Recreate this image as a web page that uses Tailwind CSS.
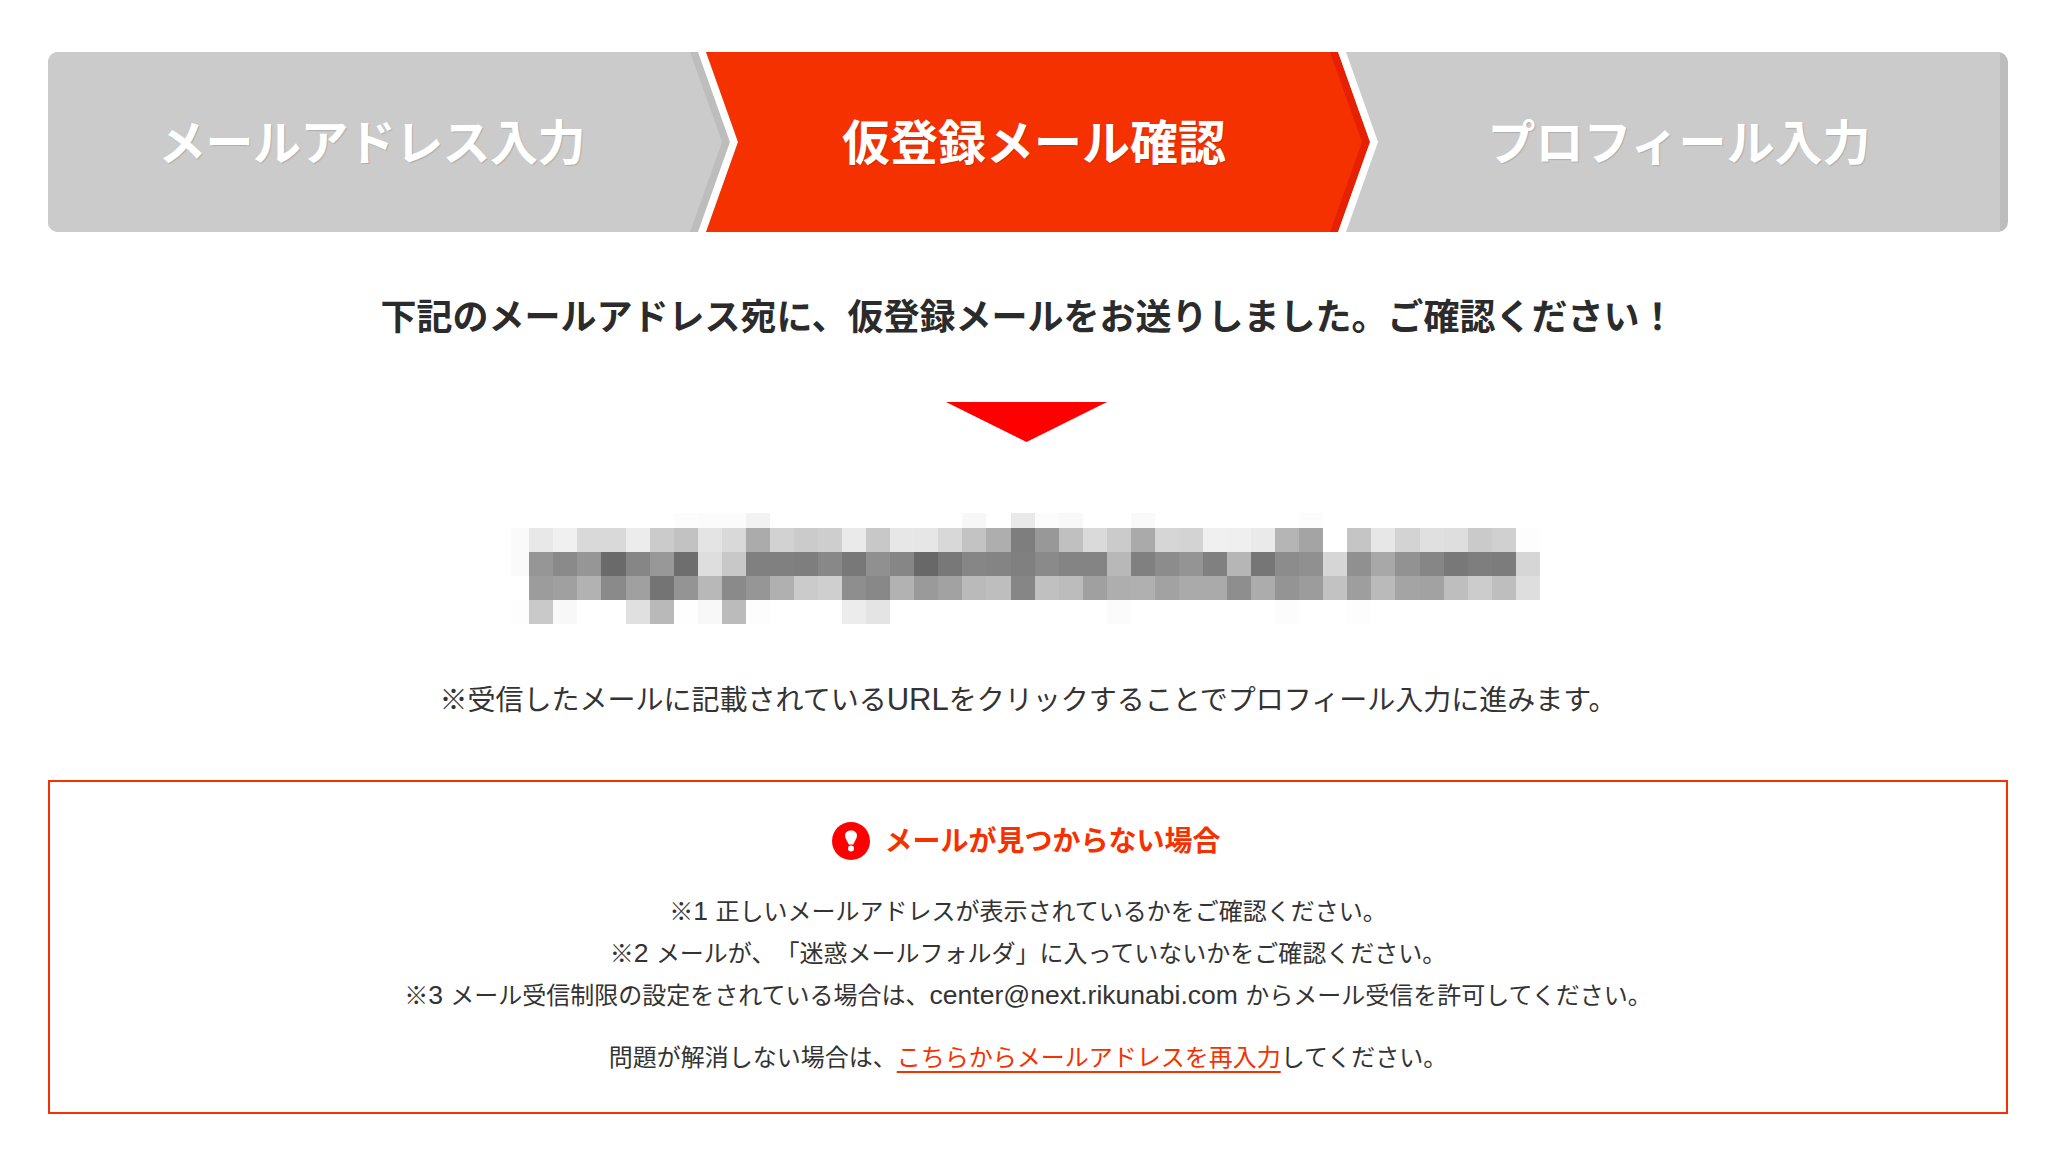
<!DOCTYPE html>
<html lang="ja">
<head>
<meta charset="utf-8">
<title>仮登録メール確認</title>
<script src="https://cdn.jsdelivr.net/npm/@tailwindcss/browser@4"></script>
</head>
<body class="bg-white font-['Liberation_Sans','Noto_Sans_CJK_JP',sans-serif] text-[#333333] [text-spacing-trim:space-all]">
<main class="ml-[48px] w-[1960px] pt-[52px] pb-[38px] flex flex-col items-center">

  <div class="relative w-full h-[180px] pb-[6px] flex items-center font-['Noto_Sans_CJK_JP',sans-serif] font-bold text-white text-[48px] leading-none [text-shadow:1px_1px_1px_rgba(0,0,0,0.15)]">
    <svg class="absolute inset-0" width="1960" height="180" viewBox="0 0 1960 180" aria-hidden="true">
      <rect x="0" y="0" width="1960" height="180" rx="10" fill="#bdbdbd"/>
      <path d="M10 0H1952V180H10A10 10 0 0 1 0 170V10A10 10 0 0 1 10 0Z" fill="#cbcbcb"/>
      <polygon points="642,0 650,0 682,90 650,180 642,180 674,90" fill="#bdbdbd"/>
      <polygon points="650,0 658,0 690,90 658,180 650,180 682,90" fill="#ffffff"/>
      <polygon points="658,0 1290,0 1322,90 1290,180 658,180 690,90" fill="#f53100"/>
      <polygon points="1282,0 1290,0 1322,90 1290,180 1282,180 1314,90" fill="#e62000"/>
      <polygon points="1290,0 1298,0 1330,90 1298,180 1290,180 1322,90" fill="#ffffff"/>
    </svg>
    <div class="relative w-[647px] text-center tracking-[-0.6px]">メールアドレス入力</div>
    <div class="relative w-[678px] text-center">仮登録メール確認</div>
    <div class="relative flex-1 pr-[23px] text-center">プロフィール入力</div>
  </div>

  <h1 class="mt-[56px] font-['Noto_Sans_CJK_JP',sans-serif] text-[36px] leading-[52px] font-bold text-[#2b2b2b]">下記のメールアドレス宛に、仮登録メールをお送りしました。ご確認ください！</h1>

  <svg class="mt-[62px] mr-[3px] block" width="161" height="40" viewBox="0 0 161 40" aria-hidden="true"><polygon points="0,0 161,0 80.5,40" fill="#ff0000"/></svg>

  <svg class="mt-[71px] block" width="1034" height="111" viewBox="0 0 1034 111" shape-rendering="crispEdges" role="img" aria-label="モザイク処理されたメールアドレス">
    <g transform="translate(18.3 0) scale(1.0025 1)">
      <rect x="-18" y="15" width="18" height="24" fill="#fafafa"/><rect x="-18" y="39" width="18" height="24" fill="#fafafa"/><rect x="-18" y="87" width="18" height="24" fill="#fdfdfd"/>
      <rect x="144" y="0" width="24" height="15" fill="#fcfcfc"/><rect x="168" y="0" width="24" height="15" fill="#fbfbfb"/><rect x="192" y="0" width="24" height="15" fill="#fbfbfb"/><rect x="216" y="0" width="24" height="15" fill="#f2f2f2"/>
      <rect x="432" y="0" width="24" height="15" fill="#f7f7f7"/><rect x="480" y="0" width="24" height="15" fill="#e9e9e9"/><rect x="504" y="0" width="24" height="15" fill="#fbfbfb"/><rect x="528" y="0" width="24" height="15" fill="#f8f8f8"/><rect x="600" y="0" width="24" height="15" fill="#f9f9f9"/><rect x="768" y="0" width="24" height="15" fill="#fcfcfc"/>

      <rect x="0" y="15" width="24" height="24" fill="#e8e8e8"/><rect x="24" y="15" width="24" height="24" fill="#f0f0f0"/><rect x="48" y="15" width="24" height="24" fill="#d9d9d9"/><rect x="72" y="15" width="24" height="24" fill="#d9d9d9"/><rect x="96" y="15" width="24" height="24" fill="#ececec"/><rect x="120" y="15" width="24" height="24" fill="#cbcbcb"/><rect x="144" y="15" width="24" height="24" fill="#c2c2c2"/><rect x="168" y="15" width="24" height="24" fill="#e4e4e4"/><rect x="192" y="15" width="24" height="24" fill="#d9d9d9"/><rect x="216" y="15" width="24" height="24" fill="#ababab"/><rect x="240" y="15" width="24" height="24" fill="#d2d2d2"/><rect x="264" y="15" width="24" height="24" fill="#cbcbcb"/><rect x="288" y="15" width="24" height="24" fill="#cecece"/><rect x="312" y="15" width="24" height="24" fill="#eaeaea"/><rect x="336" y="15" width="24" height="24" fill="#c8c8c8"/><rect x="360" y="15" width="24" height="24" fill="#e7e7e7"/><rect x="384" y="15" width="24" height="24" fill="#e6e6e6"/><rect x="408" y="15" width="24" height="24" fill="#d8d8d8"/><rect x="432" y="15" width="24" height="24" fill="#c3c3c3"/><rect x="456" y="15" width="24" height="24" fill="#aeaeae"/><rect x="480" y="15" width="24" height="24" fill="#7e7e7e"/><rect x="504" y="15" width="24" height="24" fill="#989898"/><rect x="528" y="15" width="24" height="24" fill="#c0c0c0"/><rect x="552" y="15" width="24" height="24" fill="#dadada"/><rect x="576" y="15" width="24" height="24" fill="#cbcbcb"/><rect x="600" y="15" width="24" height="24" fill="#aaaaaa"/><rect x="624" y="15" width="24" height="24" fill="#d6d6d6"/><rect x="648" y="15" width="24" height="24" fill="#d3d3d3"/><rect x="672" y="15" width="24" height="24" fill="#f0f0f0"/><rect x="696" y="15" width="24" height="24" fill="#efefef"/><rect x="720" y="15" width="24" height="24" fill="#eaeaea"/><rect x="744" y="15" width="24" height="24" fill="#b5b5b5"/><rect x="768" y="15" width="24" height="24" fill="#a4a4a4"/><rect x="816" y="15" width="24" height="24" fill="#c5c5c5"/><rect x="840" y="15" width="24" height="24" fill="#e7e7e7"/><rect x="864" y="15" width="24" height="24" fill="#d3d3d3"/><rect x="888" y="15" width="24" height="24" fill="#e0e0e0"/><rect x="912" y="15" width="24" height="24" fill="#dedede"/><rect x="936" y="15" width="24" height="24" fill="#cacaca"/><rect x="960" y="15" width="24" height="24" fill="#d0d0d0"/><rect x="984" y="15" width="24" height="24" fill="#fdfdfd"/>

      <rect x="0" y="39" width="24" height="24" fill="#969696"/><rect x="24" y="39" width="24" height="24" fill="#8a8a8a"/><rect x="48" y="39" width="24" height="24" fill="#969696"/><rect x="72" y="39" width="24" height="24" fill="#6a6a6a"/><rect x="96" y="39" width="24" height="24" fill="#868686"/><rect x="120" y="39" width="24" height="24" fill="#989898"/><rect x="144" y="39" width="24" height="24" fill="#6e6e6e"/><rect x="168" y="39" width="24" height="24" fill="#dedede"/><rect x="192" y="39" width="24" height="24" fill="#c8c8c8"/><rect x="216" y="39" width="24" height="24" fill="#808080"/><rect x="240" y="39" width="24" height="24" fill="#808080"/><rect x="264" y="39" width="24" height="24" fill="#7e7e7e"/><rect x="288" y="39" width="24" height="24" fill="#888888"/><rect x="312" y="39" width="24" height="24" fill="#787878"/><rect x="336" y="39" width="24" height="24" fill="#909090"/><rect x="360" y="39" width="24" height="24" fill="#868686"/><rect x="384" y="39" width="24" height="24" fill="#686868"/><rect x="408" y="39" width="24" height="24" fill="#787878"/><rect x="432" y="39" width="24" height="24" fill="#868686"/><rect x="456" y="39" width="24" height="24" fill="#848484"/><rect x="480" y="39" width="24" height="24" fill="#808080"/><rect x="504" y="39" width="24" height="24" fill="#8a8a8a"/><rect x="528" y="39" width="24" height="24" fill="#848484"/><rect x="552" y="39" width="24" height="24" fill="#848484"/><rect x="576" y="39" width="24" height="24" fill="#b8b8b8"/><rect x="600" y="39" width="24" height="24" fill="#808080"/><rect x="624" y="39" width="24" height="24" fill="#8c8c8c"/><rect x="648" y="39" width="24" height="24" fill="#949494"/><rect x="672" y="39" width="24" height="24" fill="#808080"/><rect x="696" y="39" width="24" height="24" fill="#b6b6b6"/><rect x="720" y="39" width="24" height="24" fill="#767676"/><rect x="744" y="39" width="24" height="24" fill="#8c8c8c"/><rect x="768" y="39" width="24" height="24" fill="#909090"/><rect x="792" y="39" width="24" height="24" fill="#d6d6d6"/><rect x="816" y="39" width="24" height="24" fill="#909090"/><rect x="840" y="39" width="24" height="24" fill="#a8a8a8"/><rect x="864" y="39" width="24" height="24" fill="#929292"/><rect x="888" y="39" width="24" height="24" fill="#868686"/><rect x="912" y="39" width="24" height="24" fill="#787878"/><rect x="936" y="39" width="24" height="24" fill="#7e7e7e"/><rect x="960" y="39" width="24" height="24" fill="#7c7c7c"/><rect x="984" y="39" width="24" height="24" fill="#d6d6d6"/>

      <rect x="0" y="63" width="24" height="24" fill="#9c9c9c"/><rect x="24" y="63" width="24" height="24" fill="#a0a0a0"/><rect x="48" y="63" width="24" height="24" fill="#b2b2b2"/><rect x="72" y="63" width="24" height="24" fill="#8a8a8a"/><rect x="96" y="63" width="24" height="24" fill="#a0a0a0"/><rect x="120" y="63" width="24" height="24" fill="#747474"/><rect x="144" y="63" width="24" height="24" fill="#949494"/><rect x="168" y="63" width="24" height="24" fill="#b8b8b8"/><rect x="192" y="63" width="24" height="24" fill="#8a8a8a"/><rect x="216" y="63" width="24" height="24" fill="#969696"/><rect x="240" y="63" width="24" height="24" fill="#b0b0b0"/><rect x="264" y="63" width="24" height="24" fill="#cbcbcb"/><rect x="288" y="63" width="24" height="24" fill="#cfcfcf"/><rect x="312" y="63" width="24" height="24" fill="#8e8e8e"/><rect x="336" y="63" width="24" height="24" fill="#888888"/><rect x="360" y="63" width="24" height="24" fill="#b2b2b2"/><rect x="384" y="63" width="24" height="24" fill="#9a9a9a"/><rect x="408" y="63" width="24" height="24" fill="#a2a2a2"/><rect x="432" y="63" width="24" height="24" fill="#bababa"/><rect x="456" y="63" width="24" height="24" fill="#bebebe"/><rect x="480" y="63" width="24" height="24" fill="#868686"/><rect x="504" y="63" width="24" height="24" fill="#c0c0c0"/><rect x="528" y="63" width="24" height="24" fill="#bcbcbc"/><rect x="552" y="63" width="24" height="24" fill="#a0a0a0"/><rect x="576" y="63" width="24" height="24" fill="#aeaeae"/><rect x="600" y="63" width="24" height="24" fill="#b0b0b0"/><rect x="624" y="63" width="24" height="24" fill="#a2a2a2"/><rect x="648" y="63" width="24" height="24" fill="#aaaaaa"/><rect x="672" y="63" width="24" height="24" fill="#aaaaaa"/><rect x="696" y="63" width="24" height="24" fill="#8e8e8e"/><rect x="720" y="63" width="24" height="24" fill="#acacac"/><rect x="744" y="63" width="24" height="24" fill="#949494"/><rect x="768" y="63" width="24" height="24" fill="#9c9c9c"/><rect x="792" y="63" width="24" height="24" fill="#c2c2c2"/><rect x="816" y="63" width="24" height="24" fill="#9e9e9e"/><rect x="840" y="63" width="24" height="24" fill="#bababa"/><rect x="864" y="63" width="24" height="24" fill="#a4a4a4"/><rect x="888" y="63" width="24" height="24" fill="#a2a2a2"/><rect x="912" y="63" width="24" height="24" fill="#bebebe"/><rect x="936" y="63" width="24" height="24" fill="#cccccc"/><rect x="960" y="63" width="24" height="24" fill="#bebebe"/><rect x="984" y="63" width="24" height="24" fill="#dedede"/>

      <rect x="0" y="87" width="24" height="24" fill="#c9c9c9"/><rect x="24" y="87" width="24" height="24" fill="#f8f8f8"/><rect x="96" y="87" width="24" height="24" fill="#e0e0e0"/><rect x="120" y="87" width="24" height="24" fill="#b9b9b9"/><rect x="144" y="87" width="24" height="24" fill="#fefefe"/><rect x="168" y="87" width="24" height="24" fill="#f8f8f8"/><rect x="192" y="87" width="24" height="24" fill="#bbbbbb"/><rect x="216" y="87" width="24" height="24" fill="#fdfdfd"/><rect x="312" y="87" width="24" height="24" fill="#ececec"/><rect x="336" y="87" width="24" height="24" fill="#e4e4e4"/><rect x="576" y="87" width="24" height="24" fill="#fbfbfb"/><rect x="744" y="87" width="24" height="24" fill="#fcfcfc"/><rect x="816" y="87" width="24" height="24" fill="#fdfdfd"/>
    </g>
  </svg>

  <p class="mt-[57px] text-[28px] leading-[40px]">※受信したメールに記載されている<span class="text-[31px] leading-none">URL</span>をクリックすることでプロフィール入力に進みます。</p>

  <section class="mt-[59px] w-full h-[334px] border-2 border-[#f53100] pt-[40px] flex flex-col items-center text-[24px] leading-[42px]">
    <h2 class="h-[38px] mr-[3px] flex items-center gap-[14px] text-[28px] leading-none font-bold text-[#f53100] font-['Noto_Sans_CJK_JP',sans-serif]">
      <svg width="38" height="38" viewBox="0 0 38 38" aria-hidden="true">
        <circle cx="19" cy="19" r="19" fill="#ff0000"/>
        <path d="M13 13.5C13 10.5 15.5 8.5 19 8.5S25 10.5 25 13.5C25 16.5 22.5 19.5 21.2 22.5H16.8C15.5 19.5 13 16.5 13 13.5Z" fill="#ffffff"/>
        <circle cx="19" cy="26.5" r="3" fill="#ffffff"/>
      </svg>
      <span class="pb-[4px]">メールが見つからない場合</span>
    </h2>
    <ul class="mt-[31px] flex flex-col items-center">
      <li>※<span class="text-[26.5px] leading-none">1 </span>正しいメールアドレスが表示されているかをご確認ください。</li>
      <li>※<span class="text-[26.5px] leading-none">2 </span>メールが、「迷惑メールフォルダ」に入っていないかをご確認ください。</li>
      <li>※<span class="text-[26.5px] leading-none">3 </span>メール受信制限の設定をされている場合は、<span class="text-[26.5px] leading-none">center@next.rikunabi.com </span>からメール受信を許可してください。</li>
    </ul>
    <p class="mt-[20px]">問題が解消しない場合は、<a href="#" class="text-[#f53100] underline decoration-2 underline-offset-[5px]">こちらからメールアドレスを再入力</a>してください。</p>
  </section>
</main>
</body>
</html>
